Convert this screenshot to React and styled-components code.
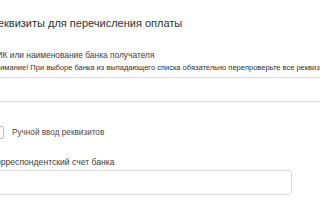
import styled, { createGlobalStyle } from "styled-components";

const Global = createGlobalStyle`
  body {
    margin: 0;
    background: #fff;
    font-family: "Liberation Sans", Arial, sans-serif;
    overflow: hidden;
  }
`;

const Page = styled.div`
  width: 340px;
  margin-left: -9px;
  padding-top: 16px;
`;

const Title = styled.h2`
  margin: 0 0 20px;
  font-size: 11px;
  font-weight: normal;
  color: #2f2f2f;
  line-height: 14px;
`;

const Label = styled.div`
  font-size: ${(p) => p.$size || "8.4px"};
  color: #3c3c3c;
  line-height: 11px;
  margin-bottom: 2px;
`;

const Hint = styled.div`
  font-size: 7.5px;
  color: #2f2f2f;
  line-height: 10px;
  white-space: nowrap;
  margin-bottom: 4px;
`;

const Input = styled.div`
  box-sizing: border-box;
  height: 25px;
  margin-top: ${(p) => p.$mt || "0"};
  width: ${(p) => p.$width || "360px"};
  border: 1px solid #dcdcdc;
  border-radius: 3px;
`;

const CheckRow = styled.label`
  display: flex;
  align-items: center;
  gap: 8px;
  margin: 24px 0 18px;
  font-size: 8.2px;
  color: #4a4a4a;
`;

const Box = styled.span`
  box-sizing: border-box;
  width: 13px;
  height: 13px;
  border: 1px solid #bbb;
  border-radius: 2px;
`;

const App = () => {
  return (
    <>
      <Global />
      <Page>
        <Title>Реквизиты для перечисления оплаты</Title>
        <Label>БИК или наименование банка получателя</Label>
        <Hint>
          Внимание! При выборе банка из выпадающего списка обязательно перепроверьте все реквизиты
        </Hint>
        <Input />
        <CheckRow>
          <Box />
          Ручной ввод реквизитов
        </CheckRow>
        <Label $size="8.6px">Корреспондентский счет банка</Label>
        <Input $width="301px" $mt="1px" />
      </Page>
    </>
  );
};

export default App;
